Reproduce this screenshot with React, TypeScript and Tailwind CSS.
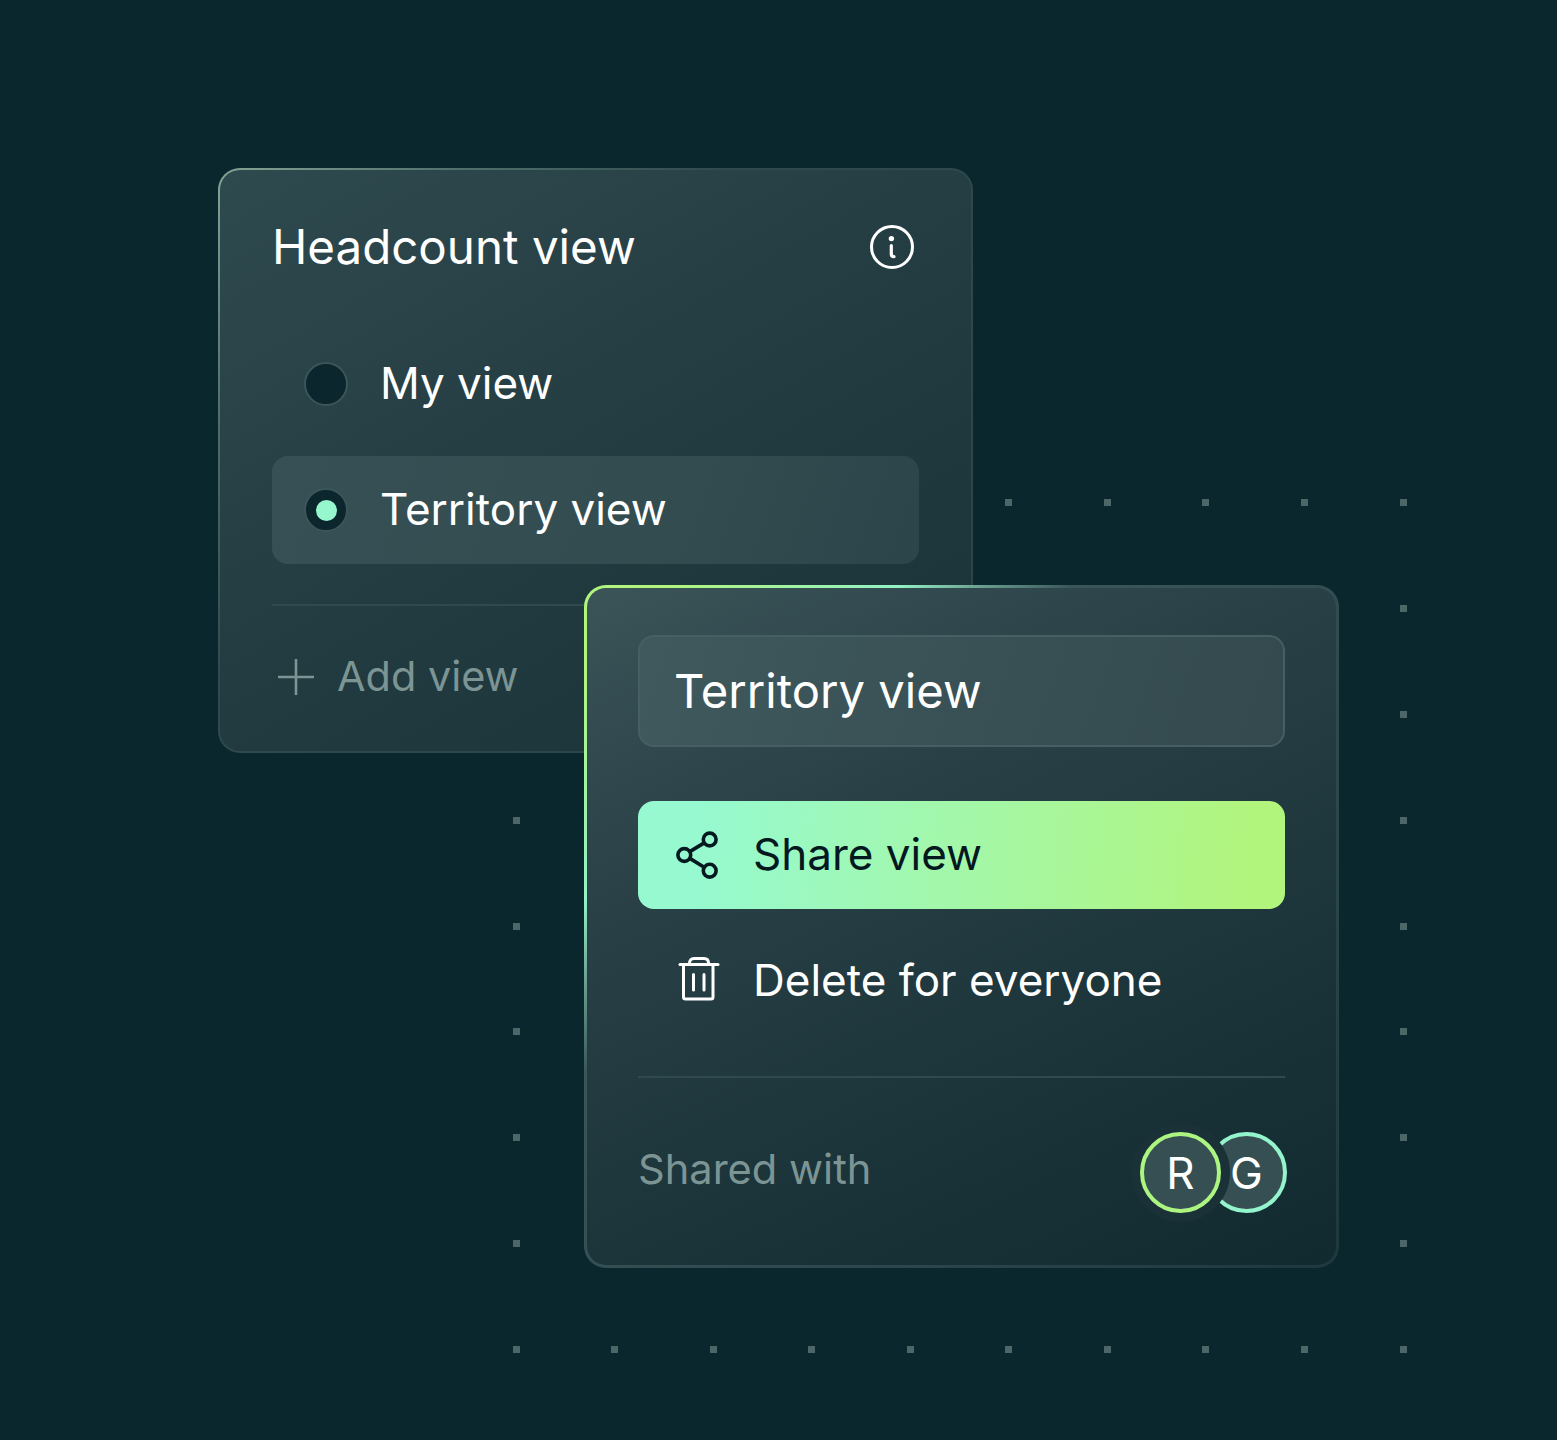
const dots = [
  ...[1008, 1107, 1205, 1304, 1403].map((x) => [x, 502]),
  ...[608, 714, 820, 926, 1031, 1137, 1243].map((y) => [1403, y]),
  ...[820, 926, 1031, 1137, 1243].map((y) => [516, y]),
  ...[516, 614, 713, 811, 910, 1008, 1107, 1205, 1304, 1403].map((x) => [x, 1349]),
];

const InfoIcon = () => (
  <svg width="46" height="46" viewBox="0 0 46 46" fill="none" stroke="white" strokeWidth="3" strokeLinecap="round">
    <circle cx="23" cy="23" r="20.5" />
    <circle cx="22.4" cy="14.6" r="2.7" fill="white" stroke="none" />
    <path d="M22.3 21.500v8.500c0 1.800 1 2.700 2.700 2.700" strokeWidth="3.200" />
  </svg>
);

const ShareIcon = () => (
  <svg width="44" height="48" viewBox="0 0 44 48" fill="none" stroke="#04191f" strokeWidth="3.6">
    <circle cx="33.7" cy="8.5" r="6.4" />
    <circle cx="8.3" cy="24" r="6.4" />
    <circle cx="33.7" cy="39.7" r="6.4" />
    <path d="M13.8 20.6 28.2 11.9M13.8 27.4 28.2 36.3" />
  </svg>
);

const TrashIcon = () => (
  <svg width="44" height="48" viewBox="0 0 44 48" fill="none" stroke="white" strokeWidth="3" strokeLinecap="round" strokeLinejoin="round">
    <path d="M4 7.500h38" />
    <path d="M13.500 7.500V6c0-2.800 1.700-4.500 4.500-4.500h10c2.800 0 4.500 1.700 4.500 4.500v1.500" />
    <path d="M7.500 7.500V40c0 1.300.7 2 2 2h25.500c1.300 0 2-.7 2-2V7.500" />
    <path d="M17.500 17.500v15.500M28 17.500v15.500" />
  </svg>
);

const PlusIcon = () => (
  <svg width="36" height="36" viewBox="0 0 36 36" fill="none" stroke="#7c9594" strokeWidth="2.600">
    <path d="M18 0v36M0 18h36" />
  </svg>
);

const Radio = ({ checked }: { checked?: boolean }) => (
  <span className="flex h-11 w-11 shrink-0 items-center justify-center rounded-full border-2 border-[#3b5559] bg-[#0b262d]">
    {checked ? <span className="h-[21px] w-[21px] rounded-full bg-[#96f7cf]" /> : null}
  </span>
);

export default function App() {
  return (
    <div
      className="relative h-[1440px] w-full overflow-hidden bg-[#0a272e] text-white"
      style={{ fontFamily: "Inter, 'Noto Sans', sans-serif" }}
    >
      <svg className="absolute inset-0" width="1557" height="1440">
        {dots.map(([x, y]) => (
          <rect key={`${x}-${y}`} x={x - 3} y={y - 3} width="7" height="7" fill="#4d6668" />
        ))}
      </svg>

      {/* back card */}
      <div className="absolute left-[218px] top-[168px] h-[585px] w-[755px] rounded-[22px] bg-[linear-gradient(135deg,#86a595_0%,#50706c_18%,#2f4a4e_38%,#2a4347_100%)] p-[2px]">
        <div className="h-full rounded-[20px] bg-[linear-gradient(150deg,#2f4a4f_0%,#233c42_50%,#193238_100%)] px-[52px] pt-[49px]">
          <div className="flex h-14 items-center justify-between">
            <span className="text-[47.5px] leading-[56px]">Headcount view</span>
            <span className="mr-[4px]">
              <InfoIcon />
            </span>
          </div>
          <div className="mt-[55px] flex h-[108px] items-center gap-[32px] pl-8">
            <Radio />
            <span className="mb-[2px] text-[44px]">My view</span>
          </div>
          <div className="mt-[18px] flex h-[108px] items-center gap-[32px] rounded-2xl bg-[linear-gradient(110deg,#365055_0%,#334c50_60%,#2b454a_100%)] pl-8">
            <Radio checked />
            <span className="mb-[2px] text-[44px]">Territory view</span>
          </div>
          <div className="mt-10 h-[2px] bg-[#2f494d]" />
          <div className="mt-[43px] flex h-14 items-center gap-[23px] pl-[6px] text-[#7c9594]">
            <PlusIcon />
            <span className="mb-[2px] text-[41.400px]">Add view</span>
          </div>
        </div>
      </div>

      {/* front card */}
      <div className="absolute left-[584px] top-[585px] h-[683px] w-[755px] rounded-[22px] bg-[linear-gradient(135deg,#b0f57e_0%,#b0f57e_6%,#93f2c5_22%,#6fa896_27%,#3a5659_34%,#1f383e_100%)] p-[3px]">
        <div className="h-full rounded-[19px] bg-[linear-gradient(155deg,#3b5458_0%,#284046_33%,#1c353b_65%,#112a30_100%)] px-[51px] pt-[47px]">
          <div className="flex h-[112px] items-center rounded-2xl border-2 border-[#465f63] bg-[linear-gradient(110deg,#3f595d_0%,#33494e_100%)] pl-[34px]">
            <span className="text-[47.200px]">Territory view</span>
          </div>
          <div className="mt-[54px] flex h-[108px] items-center gap-[33px] rounded-2xl bg-[linear-gradient(95deg,#96f9cf_10%,#b2f57c_95%)] pl-[38px] text-[#04191f]">
            <ShareIcon />
            <span className="mb-[2px] text-[44px]">Share view</span>
          </div>
          <div className="mt-[18px] flex h-[108px] items-center gap-[33px] pl-[38px]">
            <TrashIcon />
            <span className="mb-[2px] text-[44px]">Delete for everyone</span>
          </div>
          <div className="mt-[41px] h-[2px] bg-[#2f494d]" />
          <div className="mt-[54px] flex items-start justify-between">
            <span className="mt-[7px] text-[41.600px] leading-[60px] text-[#7c9594]">Shared with</span>
            <div className="-mr-[2px] flex">
              <span className="z-10 flex h-[81px] w-[81px] items-center justify-center rounded-full border-[4px] border-[#acf580] bg-[#364f53] text-[44px] shadow-[0_0_0_9px_#1a3138]">
                R
              </span>
              <span className="-ml-[15px] flex h-[81px] w-[81px] items-center justify-center rounded-full border-[4px] border-[#94f5cd] bg-[#364f53] text-[44px]">
                G
              </span>
            </div>
          </div>
        </div>
      </div>
    </div>
  );
}
